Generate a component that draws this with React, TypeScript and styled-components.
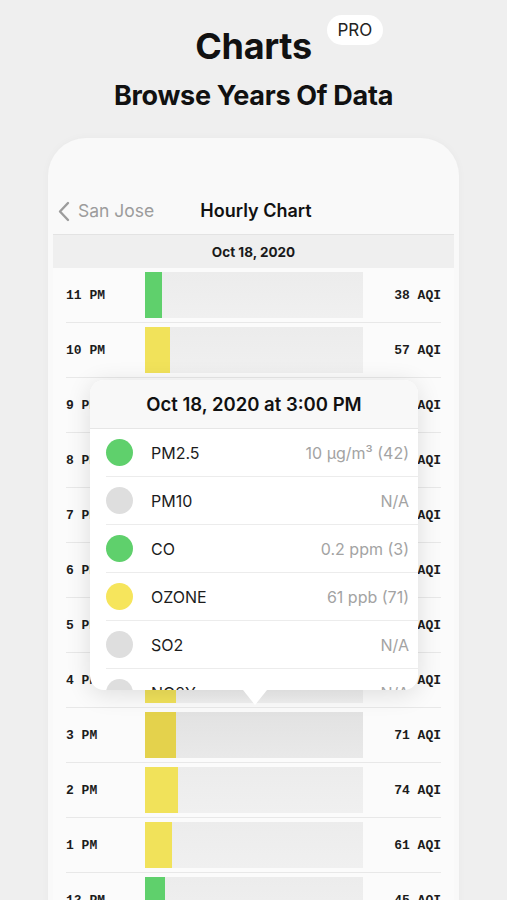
import styled, { createGlobalStyle } from "styled-components";

const GlobalStyle = createGlobalStyle`
    html, body {
        margin: 0;
        padding: 0;
        background: #efefef;
    }
    body {
        font-family: Inter, "Noto Sans", "Liberation Sans", sans-serif;
        color: #111;
    }
`

const Page = styled.div`
    width: 507px;
    height: 900px;
    overflow: hidden;
    background: #efefef;
    display: flex;
    flex-direction: column;
    align-items: center;
`

const TitleLine = styled.h1`
    position: relative;
    margin: 24px 0 0;
    font-size: 36px;
    line-height: 44px;
    font-weight: 700;
    letter-spacing: -0.3px;
`

const ProBadge = styled.span`
    position: absolute;
    left: calc(100% + 15px);
    top: -9px;
    width: 56px;
    height: 30px;
    border-radius: 15px;
    background: #fff;
    display: flex;
    align-items: center;
    justify-content: center;
    font-size: 17px;
    font-weight: 400;
    letter-spacing: 0;
    color: #222;
`

const Subtitle = styled.h2`
    margin: 11px 0 0;
    font-size: 27px;
    line-height: 34px;
    font-weight: 700;
    letter-spacing: -0.3px;
`

const Phone = styled.div`
    position: relative;
    margin-top: 25px;
    width: 411px;
    flex: 1;
    box-sizing: border-box;
    padding: 0 5px;
    background: #f9f9f9;
    border-radius: 38px 38px 0 0;
    box-shadow: 0 0 0 1px #ececec, 0 0 8px rgba(0, 0, 0, 0.03);
`

const Screen = styled.div`
    display: flex;
    flex-direction: column;
`

const NavBar = styled.div`
    height: 97px;
    box-sizing: border-box;
    display: grid;
    grid-template-columns: 1fr auto 1fr;
    align-items: end;
    padding: 0 0 11px 5px;
    border-bottom: 1px solid #e3e3e3;
`

const BackButton = styled.div`
    display: flex;
    align-items: center;
    gap: 8px;
    font-size: 17.5px;
    color: #9c9c9c;
    line-height: 24px;
`

const NavTitle = styled.div`
    font-size: 18px;
    font-weight: 600;
    line-height: 24px;
    color: #111;
`

const DateBand = styled.div`
    height: 33px;
    background: #efefef;
    display: flex;
    align-items: center;
    justify-content: center;
    font-size: 13.5px;
    font-weight: 700;
    color: #1a1a1a;
`

const Rows = styled.div`
    background: #fbfbfb;
    padding: 0 13px;
`

const Row = styled.div`
    height: 55px;
    box-sizing: border-box;
    display: grid;
    grid-template-columns: 79px 218px 1fr;
    align-items: center;
    border-bottom: 1px solid #e8e8e8;
`

const Mono = styled.span`
    font-family: "Liberation Mono", "DejaVu Sans Mono", monospace;
    font-size: 13px;
    font-weight: 700;
    color: #1c1c1c;
`

const Aqi = styled(Mono)`
    text-align: right;
`

const Track = styled.div<{ $selected?: boolean }>`
    height: 46px;
    display: flex;
    background: ${p => p.$selected
        ? "linear-gradient(#e2e2e2, #e9e9e9)"
        : "linear-gradient(#ececec, #f0f0f0)"};
`

const Fill = styled.div<{ $tone: "good" | "moderate"; $selected?: boolean }>`
    height: 100%;
    background: ${p => p.$tone === "good"
        ? "#5fd06c"
        : p.$selected ? "#e4d24c" : "#f1e25a"};
`

const Popover = styled.div`
    position: absolute;
    left: 42px;
    top: 242px;
    width: 328px;
    height: 310px;
    background: #fff;
    border-radius: 14px;
    box-shadow: 0 4px 24px rgba(0, 0, 0, 0.12);
    display: flex;
    flex-direction: column;
    &::after {
        content: "";
        position: absolute;
        left: 153px;
        bottom: -15px;
        border-left: 12px solid transparent;
        border-right: 12px solid transparent;
        border-top: 15px solid #fff;
    }
`

const PopoverHeader = styled.div`
    height: 48px;
    flex-shrink: 0;
    background: #f8f8f8;
    border-radius: 14px 14px 0 0;
    border-bottom: 1px solid #e6e6e6;
    display: flex;
    align-items: center;
    justify-content: center;
    font-size: 18.5px;
    font-weight: 600;
    color: #111;
`

const PopoverList = styled.div`
    flex: 1;
    overflow: hidden;
    border-radius: 0 0 14px 14px;
    padding-left: 16px;
`

const Pollutant = styled.div`
    height: 48px;
    box-sizing: border-box;
    display: grid;
    grid-template-columns: 45px 1fr auto;
    align-items: center;
    padding-right: 9px;
    border-bottom: 1px solid #ececec;
`

const Dot = styled.div<{ $color: string }>`
    width: 27px;
    height: 27px;
    border-radius: 50%;
    background: ${p => p.$color};
`

const PollutantName = styled.span`
    font-size: 16px;
    color: #1c1c1c;
`

const PollutantValue = styled.span`
    font-size: 16px;
    color: #a3a3a3;
`

const hours = [
    { label: "11 PM", aqi: 38 },
    { label: "10 PM", aqi: 57 },
    { label: "9 PM", aqi: 58 },
    { label: "8 PM", aqi: 60 },
    { label: "7 PM", aqi: 63 },
    { label: "6 PM", aqi: 66 },
    { label: "5 PM", aqi: 69 },
    { label: "4 PM", aqi: 71 },
    { label: "3 PM", aqi: 71, selected: true },
    { label: "2 PM", aqi: 74 },
    { label: "1 PM", aqi: 61 },
    { label: "12 PM", aqi: 45 },
]

const green = "#5fd06c"
const grey = "#dedede"
const yellow = "#f6e55c"

const pollutants = [
    { name: "PM2.5", value: "10 µg/m³ (42)", color: green },
    { name: "PM10", value: "N/A", color: grey },
    { name: "CO", value: "0.2 ppm (3)", color: green },
    { name: "OZONE", value: "61 ppb (71)", color: yellow },
    { name: "SO2", value: "N/A", color: grey },
    { name: "NO2Y", value: "N/A", color: grey },
]

const Chevron = () => (
    <svg width="12" height="21" viewBox="0 0 12 21" fill="none">
        <polyline points="10,2 2,10.5 10,19" stroke="#9c9c9c" strokeWidth="2.4" strokeLinecap="round" strokeLinejoin="round" />
    </svg>
)

const App = () => {
    return (
        <Page>
            <GlobalStyle />
            <TitleLine>
                Charts
                <ProBadge>PRO</ProBadge>
            </TitleLine>
            <Subtitle>Browse Years Of Data</Subtitle>
            <Phone>
                <Screen>
                    <NavBar>
                        <BackButton>
                            <Chevron />
                            San Jose
                        </BackButton>
                        <NavTitle>Hourly Chart</NavTitle>
                        <div />
                    </NavBar>
                    <DateBand>Oct 18, 2020</DateBand>
                    <Rows>
                        {hours.map(h => (
                            <Row key={h.label}>
                                <Mono>{h.label}</Mono>
                                <Track $selected={h.selected}>
                                    <Fill
                                        $tone={h.aqi <= 50 ? "good" : "moderate"}
                                        $selected={h.selected}
                                        style={{ width: Math.round(h.aqi * 0.44) }}
                                    />
                                </Track>
                                <Aqi>{h.aqi} AQI</Aqi>
                            </Row>
                        ))}
                    </Rows>
                </Screen>
                <Popover>
                    <PopoverHeader>Oct 18, 2020 at 3:00 PM</PopoverHeader>
                    <PopoverList>
                        {pollutants.map(p => (
                            <Pollutant key={p.name}>
                                <Dot $color={p.color} />
                                <PollutantName>{p.name}</PollutantName>
                                <PollutantValue>{p.value}</PollutantValue>
                            </Pollutant>
                        ))}
                    </PopoverList>
                </Popover>
            </Phone>
        </Page>
    )
}

export default App;
